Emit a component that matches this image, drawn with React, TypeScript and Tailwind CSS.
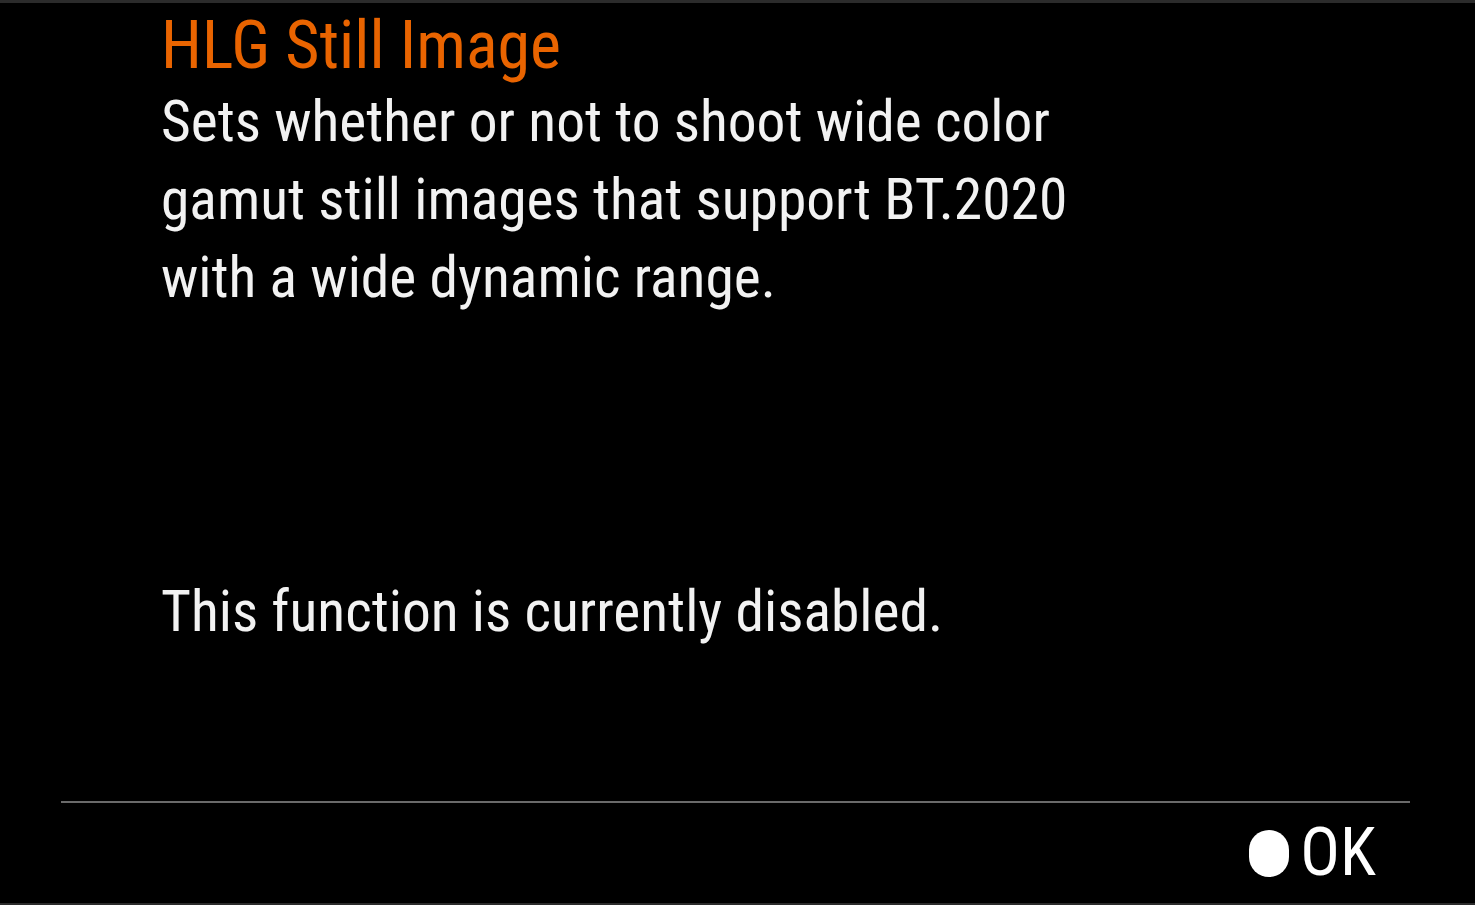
export default function App() {
  return (
    <div className="flex h-[905px] w-full flex-col border-t-[3px] border-b-2 border-[#2b2b2b] bg-black font-['Roboto_Condensed','Liberation_Sans',sans-serif] text-[#f2f2f2]">
      {/* Help text */}
      <div className="flex flex-1 flex-col pl-[161px] pt-[6px]">
        <h1 className="text-[66px] leading-[74px] font-normal text-[#e96400]">HLG Still Image</h1>
        <p className="text-[57.5px] leading-[78px]">
          Sets whether or not to shoot wide color
          <br />
          gamut still images that support BT.2020
          <br />
          with a wide dynamic range.
        </p>
        <p className="mt-[256px] text-[57.5px] leading-[78px]">This function is currently disabled.</p>
      </div>

      <div className="ml-[61px] mr-[65px] h-[2px] bg-[#6a6a6a]" />

      {/* Footer */}
      <div className="flex h-[100px] items-center justify-end gap-[11px] pr-[99px]">
        <span className="h-[47px] w-[40px] rounded-full bg-white" />
        <span className="text-[66px] leading-none text-white">OK</span>
      </div>
    </div>
  );
}
